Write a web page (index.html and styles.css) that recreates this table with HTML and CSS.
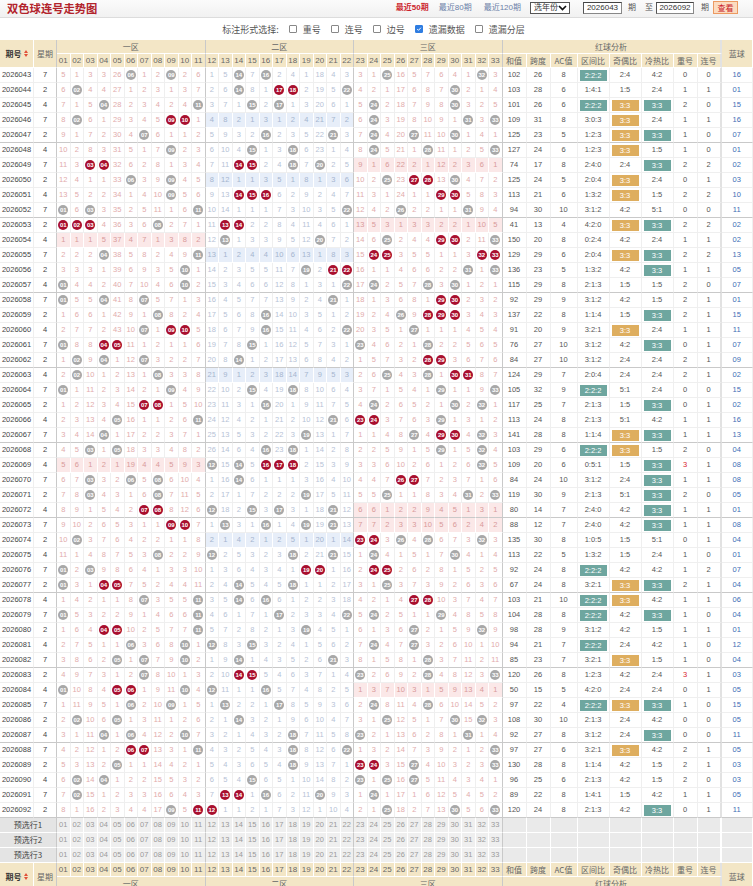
FILE: index.html
```html
<!DOCTYPE html>
<html lang="zh-CN">
<head>
<meta charset="utf-8">
<title>双色球连号走势图</title>
<link rel="stylesheet" href="styles.css">
</head>
<body>
<div class="topbar">
  <h1 class="title">双色球连号走势图</h1>
  <div class="tools">
    <a class="lnk on">最近50期</a>
    <a class="lnk m10">最近80期</a>
    <a class="lnk m12">最近120期</a>
    <span class="sel">选年份<svg width="9" height="6" viewBox="0 0 9 6"><path d="M1 1l3.5 3.5L8 1" stroke="#111" stroke-width="1.7" fill="none"/></svg></span>
    <input class="inp i1" value="2026043">
    <span class="lbl m6">期</span>
    <span class="lbl m9">至</span>
    <input class="inp i2" value="2026092">
    <span class="lbl m7">期</span>
    <button class="btn">查看</button>
  </div>
</div>
<div class="opts">
  <span class="opt-title">标注形式选择:</span>
  <span class="cb"></span><span class="cbl">重号</span>
  <span class="cb"></span><span class="cbl">连号</span>
  <span class="cb"></span><span class="cbl">边号</span>
  <span class="cb on"><svg width="8" height="8" viewBox="0 0 8 8"><path d="M1.6 4.1l1.7 1.7L6.5 2.3" stroke="#fff" stroke-width="1.3" fill="none"/></svg></span><span class="cbl">遗漏数据</span>
  <span class="cb"></span><span class="cbl">遗漏分层</span>
</div>
<div class="chart">
  <div class="g head" id="head"></div>
  <div id="rows"></div>
  <div id="pre"></div>
  <div class="g foot" id="foot"></div>
</div>
<script src="script.js"></script>
</body>
</html>
```
FILE: styles.css
```css
body {
  margin: 0;
  width: 753px;
  font-family: "Liberation Sans", "Noto Sans CJK SC", sans-serif;
  font-size: 7.5px;
  color: #444;
  background: #fff;
}
.topbar {
  height: 17px;
  border-bottom: 1px solid #dcdcdc;
  background: linear-gradient(#fbfbfb, #f1f1f1);
  display: flex;
  align-items: center;
  justify-content: space-between;
  padding: 0 15px 0 7px;
}
.title {
  margin: 0;
  font-size: 11.3px;
  font-weight: bold;
  color: #b2232b;
  line-height: 1;
  font-family: "Noto Sans CJK SC", sans-serif;
}
.tools {
  display: flex;
  align-items: center;
  font-size: 8px;
  line-height: 1;
  margin-top: -2px;
}
.lnk { color: #6b7fa8; }
.lnk.on { color: #cc1f2d; font-weight: bold; }
.m10 { margin-left: 10px; }
.m12 { margin-left: 12px; }
.m6 { margin-left: 6px; }
.m7 { margin-left: 7px; }
.m9 { margin-left: 9px; }
.lbl { color: #555; }
.sel {
  margin-left: 9px;
  width: 40px;
  height: 12px;
  box-sizing: border-box;
  border: 1px solid #555;
  display: flex;
  align-items: center;
  justify-content: space-between;
  padding: 0 2px 0 3px;
  color: #333;
  background: #fff;
}
.inp {
  box-sizing: border-box;
  height: 12px;
  padding: 0;
  border: 1px solid #888;
  border-top-color: #444;
  border-left-color: #555;
  font: 8px "Liberation Sans", sans-serif;
  color: #333;
  text-align: center;
  background: #fff;
}
.i1 { margin-left: 13px; width: 39px; }
.i2 { margin-left: 3px; width: 38px; }
.btn {
  margin-left: 4px;
  width: 25px;
  height: 13px;
  padding: 0;
  border: 1px solid #ec9a62;
  background: #fcdcc0;
  color: #c8202b;
  font: 8px "Noto Sans CJK SC", sans-serif;
  line-height: 1;
}
.opts {
  height: 22px;
  display: flex;
  align-items: center;
  justify-content: center;
  font-size: 9px;
  color: #555;
  padding-right: 6px;
  font-family: "Noto Sans CJK SC", sans-serif;
}
.cb {
  margin: 0 6px 0 10px;
  width: 8px;
  height: 8px;
  box-sizing: border-box;
  border: 1px solid #888;
  border-radius: 1px;
  background: #fff;
  display: inline-flex;
  align-items: center;
  justify-content: center;
}
.cb.on { background: #2f7de1; border-color: #2f7de1; }
.cb svg { display: block; }

.g {
  display: grid;
  grid-template-columns: 34px 23px repeat(33, 13.5px) 24px 24px 27px 32px 32px 32px 24px 24px 31.5px;
}
.head, .foot { grid-template-rows: 14px 14px; }

.c {
  box-sizing: border-box;
  border-right: 1px solid #efefef;
  border-bottom: 1px solid #efefef;
  display: flex;
  align-items: center;
  justify-content: center;
  white-space: nowrap;
  overflow: hidden;
  line-height: 1;
}
.h {
  background: #f3e6c6;
  border-right-color: #fff;
  border-bottom-color: #fff;
  color: #666;
  font-size: 8px;
}
.h.cn { font-family: "Noto Sans CJK SC", sans-serif; }
.h.issueh { color: #333; font-weight: bold; }
.issueh svg { margin-left: 2px; }
.span2r { grid-row: span 2; }
.span2 { grid-column: span 2; }
.span8 { grid-column: span 8; }
.span11 { grid-column: span 11; }
.c.zs { border-right-color: #c9c9c9; }
.c.bs { border-right: 2px solid #e2e2e2; }

.row { height: 15px; }
.row.gend .c { border-bottom-color: #c9c9c9; }
.issue { color: #444; }
.wk { color: #444; }
.z1, .z3 { color: #e2abab; }
.z2 { color: #b6c2d6; }
.sh.z1, .sh.z3 { background: #fbe8e8; color: #d99a9a; border-right-color: #fff; }
.sh.z2 { background: #e7eef9; color: #a5b5cf; border-right-color: #fff; }
.row:not(.gend) .sh { border-bottom-color: #fff; }
.sh.zs { border-right-color: #c9c9c9; }

.ball {
  width: 10px;
  height: 10px;
  border-radius: 50%;
  color: #fff;
  font-size: 6px;
  font-weight: bold;
  display: flex;
  align-items: center;
  justify-content: center;
  letter-spacing: -0.2px;
}
.ball.red { background: #a90f2e; }
.ball.gray { background: #a8a8a8; }

.an { color: #555; }
.rep3 { color: #d8262e; }
.hl {
  width: 27px;
  height: 11px;
  line-height: 11px;
  text-align: center;
  color: #fff;
}
.hl.teal { background: #6ea69f; }
.hl.org { background: #deae5f; }
.blue { color: #3d6db5; }

.pre .c { border-right-color: #fff; border-bottom-color: #fff; }
.pre .lab {
  background: #e4e4e4;
  color: #444;
  font-size: 8px;
  font-family: "Noto Sans CJK SC", sans-serif;
}
.pre .n { background: #efefef; color: #9a9a9a; }
.pre .e { background: #eaeaea; }
.pre .n.zs, .pre .lab.zs { border-right-color: #c9c9c9; }
.pre .e.bs { border-right: 2px solid #fff; }
```
FILE: script.js
```js
var DATA = [
"6 9 14 16 25 32|16|102 26 8 2:2:2 2:4 4:2 0 0",
"2 14 17 18 22 30|01|103 28 6 1:4:1 1:5 2:4 1 1",
"4 11 15 17 24 30|15|101 26 6 2:2:2 3:3 3:3 2 0",
"2 9 10 24 31 33|16|109 31 8 3:0:3 3:3 2:4 1 1",
"7 16 21 24 27 30|07|125 23 5 1:2:3 3:3 3:3 1 0",
"9 15 18 24 28 33|01|127 24 6 1:2:3 3:3 1:5 1 0",
"3 4 14 15 18 20|02|74 17 8 2:4:0 2:4 3:3 2 2",
"6 9 25 27 28 30|03|125 24 5 2:0:4 3:3 2:4 0 1",
"9 14 15 16 29 30|10|113 21 6 1:3:2 3:3 1:5 2 2",
"1 3 11 22 26 31|11|94 30 10 3:1:2 4:2 5:1 0 0",
"1 2 3 8 13 14|02|41 13 4 4:2:0 3:3 3:3 2 2",
"13 20 25 29 30 33|02|150 20 8 0:2:4 4:2 2:4 1 1",
"4 11 24 25 32 33|13|129 29 6 2:0:4 3:3 3:3 2 2",
"10 19 21 22 31 33|05|136 23 5 1:3:2 4:2 3:3 1 1",
"1 10 22 24 28 30|07|115 29 8 2:1:3 1:5 1:5 2 0",
"1 4 7 21 29 30|01|92 29 9 3:1:2 4:2 1:5 2 1",
"8 16 26 28 29 30|15|137 22 8 1:1:4 1:5 3:3 2 1",
"7 9 10 16 22 27|11|91 20 9 3:2:1 3:3 2:4 1 1",
"1 4 5 15 23 28|07|76 27 10 3:1:2 4:2 3:3 0 1",
"2 4 7 14 28 29|09|84 27 10 3:1:2 2:4 2:4 2 1",
"2 8 25 28 30 31|02|124 29 7 2:0:4 2:4 2:4 2 1",
"1 9 15 18 29 33|15|105 32 9 2:2:2 5:1 2:4 0 0",
"7 8 16 24 30 32|02|117 25 7 2:1:3 1:5 3:3 0 1",
"5 11 21 23 24 29|16|113 24 8 2:1:3 5:1 4:2 1 1",
"4 19 27 29 30 32|13|141 28 8 1:1:4 3:3 3:3 1 1",
"3 5 16 18 29 32|04|103 29 6 2:2:2 3:3 1:5 2 0",
"12 14 16 17 18 32|08|109 20 6 0:5:1 1:5 3:3 3 1",
"3 6 8 14 26 27|08|84 24 10 3:1:2 2:4 3:3 1 1",
"3 8 19 25 31 33|05|119 30 9 2:1:3 5:1 3:3 2 0",
"7 8 12 15 17 21|01|80 14 7 2:4:0 4:2 3:3 1 1",
"9 10 13 16 19 21|08|88 12 7 2:4:0 4:2 3:3 1 1",
"2 23 24 26 28 32|04|135 30 8 1:0:5 1:5 5:1 0 1",
"8 12 18 21 24 30|01|113 22 5 1:3:2 1:5 2:4 1 0",
"1 3 19 20 24 25|07|92 24 8 2:2:2 4:2 4:2 1 2",
"1 4 5 14 18 25|04|67 24 8 3:2:1 3:3 3:3 2 1",
"7 11 14 16 27 28|06|103 21 10 2:2:2 3:3 4:2 1 1",
"1 11 17 22 24 29|04|104 28 8 2:2:2 4:2 3:3 1 0",
"4 5 11 19 27 32|01|98 28 9 3:1:2 4:2 1:5 1 1",
"6 10 12 15 24 27|12|94 21 7 2:2:2 2:4 4:2 1 0",
"5 7 10 14 21 28|04|85 23 7 3:2:1 3:3 1:5 1 0",
"7 14 15 23 28 33|03|120 26 8 1:2:3 4:2 2:4 3 1",
"1 5 6 10 12 16|05|50 15 5 4:2:0 2:4 2:4 0 1",
"6 9 13 17 24 28|15|97 22 4 2:2:2 3:3 3:3 1 0",
"2 5 14 25 30 32|05|108 30 10 2:1:3 2:4 4:2 0 0",
"4 6 10 18 23 31|11|92 27 8 3:1:2 2:4 3:3 0 0",
"6 7 11 18 22 33|05|97 27 6 3:2:1 3:3 4:2 2 1",
"5 18 23 24 27 33|03|130 28 8 1:1:4 4:2 1:5 2 1",
"2 4 15 23 25 27|03|96 25 6 2:1:3 4:2 1:5 2 0",
"2 13 14 16 20 24|05|89 22 8 1:4:1 1:5 4:2 1 1",
"9 11 12 25 30 33|11|120 24 8 2:1:3 4:2 3:3 0 1"
];
var INIT = [5,1,3,3,26,0,1,2,0,2,6, 1,5,0,7,0,2,4,1,18,4,3, 3,1,0,16,5,7,6,4,1,0,3];
var AN = ["和值","跨度","AC值","区间比","奇偶比","冷热比","重号","连号"];
var ZONES = ["一区","二区","三区"];
var SORT = '<svg width="4" height="7" viewBox="0 0 4 7"><path d="M2 0L4 3H0zM2 7L0 4H4z" fill="#e0503a"/></svg>';

function pad(n) { return (n < 10 ? "0" : "") + n; }
function numCells(cls) {
  var s = "";
  for (var n = 1; n <= 33; n++) {
    s += '<div class="c ' + cls + (n % 11 === 0 ? " zs" : "") + '">' + pad(n) + "</div>";
  }
  return s;
}
function anHead() {
  var s = "";
  AN.forEach(function (t, i) {
    s += '<div class="c h cn' + (i === 7 ? " bs" : "") + '">' + t + "</div>";
  });
  return s;
}
function zoneHead() {
  var s = "";
  ZONES.forEach(function (z) { s += '<div class="c h cn span11 zs">' + z + "</div>"; });
  s += '<div class="c h cn span8 bs">红球分析</div>';
  return s;
}

/* top header */
document.getElementById("head").innerHTML =
  '<div class="c h cn issueh span2r">期号' + SORT + '</div>' +
  '<div class="c h cn span2r zs">星期</div>' +
  zoneHead() +
  '<div class="c h cn span2r">蓝球</div>' +
  numCells("h") + anHead();

/* data rows */
var cnt = INIT.slice();
var prev = null;
var html = "";
DATA.forEach(function (line, i) {
  var parts = line.split("|");
  var win = parts[0].split(" ").map(Number);
  var set = {};
  win.forEach(function (n) { set[n] = true; });
  var an = parts[2].split(" ");
  var empty = [0, 1, 2].map(function (z) {
    return !win.some(function (n) { return n > z * 11 && n <= z * 11 + 11; });
  });
  var r = '<div class="g row' + ((i + 1) % 5 === 0 ? " gend" : "") + '">';
  r += '<div class="c issue">' + (2026043 + i) + "</div>";
  r += '<div class="c wk zs">' + [7, 2, 4][i % 3] + "</div>";
  for (var n = 1; n <= 33; n++) {
    var z = Math.floor((n - 1) / 11);
    if (i > 0) cnt[n - 1] = (prev[n] ? 0 : cnt[n - 1]) + 1;
    var c = "c z" + (z + 1) + (empty[z] ? " sh" : "") + (n % 11 === 0 ? " zs" : "");
    var inner;
    if (set[n]) {
      var red = set[n - 1] || set[n + 1];
      inner = '<span class="ball ' + (red ? "red" : "gray") + '">' + pad(n) + "</span>";
      cnt[n - 1] = 0;
    } else {
      inner = cnt[n - 1];
    }
    r += '<div class="' + c + '">' + inner + "</div>";
  }
  prev = set;
  r += '<div class="c an">' + an[0] + "</div>";
  r += '<div class="c an">' + an[1] + "</div>";
  r += '<div class="c an">' + an[2] + "</div>";
  r += '<div class="c an">' + (an[3] === "2:2:2" ? '<span class="hl teal">' + an[3] + "</span>" : an[3]) + "</div>";
  r += '<div class="c an">' + (an[4] === "3:3" ? '<span class="hl org">' + an[4] + "</span>" : an[4]) + "</div>";
  r += '<div class="c an">' + (an[5] === "3:3" ? '<span class="hl teal">' + an[5] + "</span>" : an[5]) + "</div>";
  r += '<div class="c an' + (an[6] === "3" ? " rep3" : "") + '">' + an[6] + "</div>";
  r += '<div class="c an bs">' + an[7] + "</div>";
  r += '<div class="c blue">' + parts[1] + "</div>";
  r += "</div>";
  html += r;
});
document.getElementById("rows").innerHTML = html;

/* preselect rows */
var pre = "";
for (var k = 1; k <= 3; k++) {
  var p = '<div class="g row pre"><div class="c lab span2 zs">预选行' + k + "</div>" + numCells("n");
  for (var e = 0; e < 8; e++) p += '<div class="c e' + (e === 7 ? " bs" : "") + '"></div>';
  p += '<div class="c e"></div></div>';
  pre += p;
}
document.getElementById("pre").innerHTML = pre;

/* footer header */
document.getElementById("foot").innerHTML =
  '<div class="c h cn issueh span2r">期号' + SORT + '</div>' +
  '<div class="c h cn span2r zs">星期</div>' +
  numCells("h") + anHead() +
  '<div class="c h cn span2r">蓝球</div>' +
  zoneHead();
```
